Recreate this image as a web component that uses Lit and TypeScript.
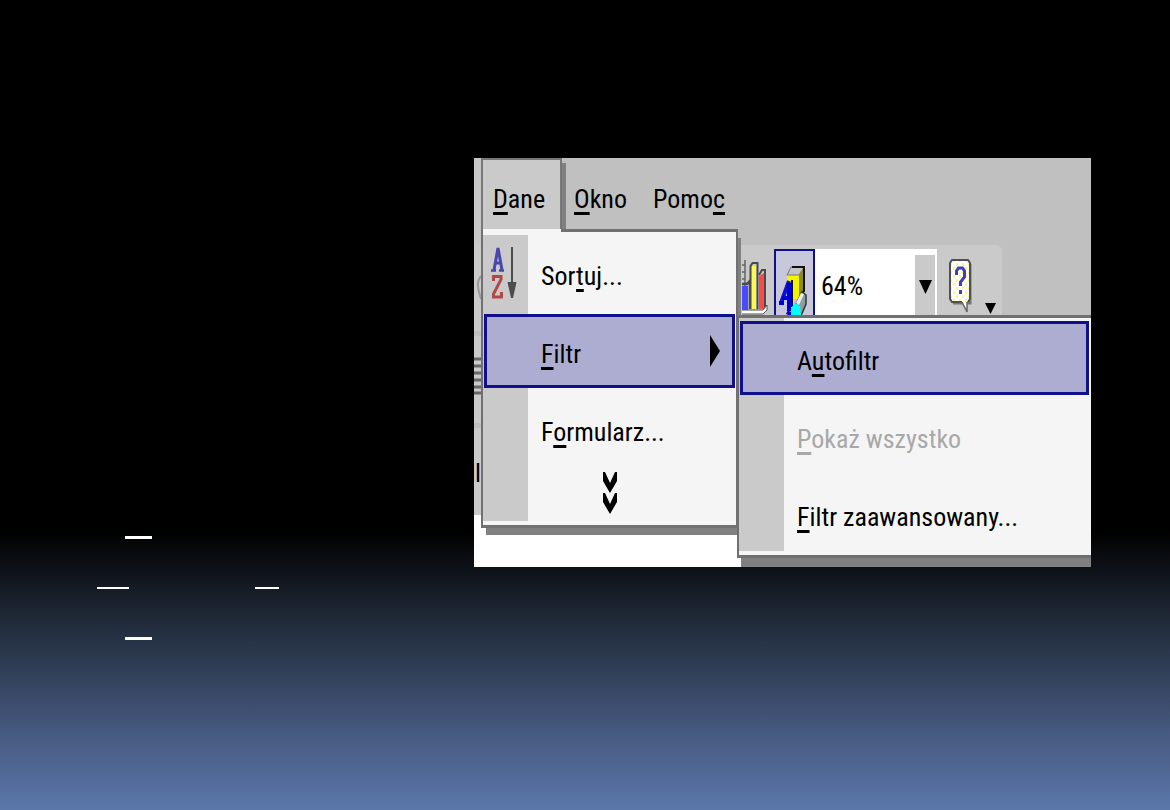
import { LitElement, html, svg, css } from "lit";
import { customElement } from "lit/decorators.js";

const sortIcon = svg`
  <svg class="icon" viewBox="0 0 28 54" width="28" height="54" aria-hidden="true">
    <path d="M3 24 7 2 11 24M4.500 17h5" fill="none" stroke="#4848ac" stroke-width="3"/>
    <path d="M0 24.500h5M8 24.500h5" fill="none" stroke="#4848ac" stroke-width="2.500"/>
    <path d="M2.500 35v-4.500h7.500v3L2.500 48v3h8v-5" fill="none" stroke="#b04848" stroke-width="3"/>
    <path d="M21 1v38" stroke="#4c4c4c" stroke-width="2"/>
    <path d="M16.500 36h9L22 52h-2z" fill="#4c4c4c"/>
  </svg>`;

const chartIcon = svg`
  <svg class="icon" viewBox="0 0 26 60" width="26" height="60" aria-hidden="true">
    <path d="M3 2v26M0 7h3M0 14h3M0 21h3" fill="none" stroke="#666" stroke-width="1.500"/>
    <path d="M0 28h6v24H0z" fill="#4a4aff"/>
    <path d="M0 26h5l3-3v28" fill="none" stroke="#4a4a4a" stroke-width="2.500"/>
    <path d="M9 8h5v43H9z" fill="#fafa50"/>
    <path d="M8.500 51V8l2-3h5v46" fill="none" stroke="#4a4a4a" stroke-width="2"/>
    <path d="M17 18l5-3v36h-5z" fill="#ff4848"/>
    <path d="M17 17l3-5h3v39" fill="none" stroke="#4a4a4a" stroke-width="2"/>
    <path d="M0 52h21l4-5v5l-4 4H0" fill="#fff" stroke="#555" stroke-width="1"/>
    <path d="M0 58.500h22" stroke="#4a4a4a" stroke-width="3"/>
  </svg>`;

const drawIcon = svg`
  <svg class="icon" viewBox="0 0 30 56" width="30" height="56" aria-hidden="true">
    <path d="M8 10h12v24H8z" fill="#f4f400"/>
    <path d="M8 10 12 2h13l-5 8z" fill="#c4c4c4" stroke="#777" stroke-width="1"/>
    <path d="M20 10 25 2v24l-5 8z" fill="#8c8c20"/>
    <path d="M13 2h12v24l-4 6" fill="none" stroke="#111" stroke-width="2"/>
    <path d="M10 16 2 38" fill="none" stroke="#1010c8" stroke-width="4"/>
    <path d="M10 18v28" stroke="#0000d8" stroke-width="4"/>
    <path d="M3 33h8M0 38h5M8 47l5 3" stroke="#0000d8" stroke-width="4"/>
    <path d="M13 15v27" stroke="#101030" stroke-width="2"/>
    <path d="M16 41 23 27l4 3v9l-6 14z" fill="#8ca0a0" stroke="#333" stroke-width="1.500"/>
    <path d="M17 38 22 28l3 1-5 11z" fill="#eee"/>
    <path d="M12 43l4-5 5 3 1 9-3 5h-4l-3-5z" fill="#00ffff"/>
  </svg>`;

const helpIcon = svg`
  <svg class="icon" viewBox="0 0 24 56" width="24" height="56" aria-hidden="true">
    <defs>
      <pattern id="dots" width="6" height="8" patternUnits="userSpaceOnUse">
        <path d="M0 0h6v8H0z" fill="#fff"/>
        <path d="M4 1h2v3H4zM1 5h2v3H1z" fill="#fff87c"/>
      </pattern>
    </defs>
    <path d="M4 45h17V6" fill="none" stroke="#777" stroke-width="3"/>
    <path d="M3 2h16l2 3v36l-3 3v10l-5-10H3l-2-3V5z" fill="url(#dots)"/>
    <path d="M13 44H3l-2-3V5l2-3h16l2 3v36l-2 3" fill="none" stroke="#505050" stroke-width="2"/>
    <path d="M13 44l5 10V44" fill="none" stroke="#666" stroke-width="1.500"/>
    <path d="M7.500 17v-4l2-3h4l2 3v6l-4 5v4" fill="none" stroke="#4040b4" stroke-width="3"/>
    <path d="M10 32h3v4h-3z" fill="#4040b4"/>
  </svg>`;

const chevrons = svg`
  <svg class="icon" viewBox="0 0 14 42" width="14" height="42" aria-hidden="true">
    <path d="M0 0v9l7 12 7-12V0h-2L7 11 2 0zM0 21v9l7 12 7-12v-9h-2L7 32 2 21z" fill="#000"/>
  </svg>`;

@customElement("app-root")
export class AppRoot extends LitElement {
  static styles = css`
    :host {
      display: block;
      font-family: "Roboto Condensed", "Liberation Sans", sans-serif;
      font-size: 26px;
      line-height: 40px;
      color: #000;
    }
    * { box-sizing: border-box; }
    .slide {
      min-height: 100vh;
      display: grid;
      grid-template-columns: 377px 1fr;
      align-items: start;
      padding: 158px 79px 0 97px;
      background: linear-gradient(#000 0, #000 65.500%, #1c2430 75%, #2e3d54 82%, #485b82 91%, #5b77aa 100%);
    }
    .blanks {
      display: grid;
      gap: 48px;
      padding-top: 378px;
    }
    .line { display: flex; gap: 126px; }
    .line.inset { padding-left: 28px; }
    .rule { width: 27px; height: 3px; background: #fff; }
    .rule.wide { width: 32px; height: 2px; }
    .rule.slim { width: 24px; height: 2px; }

    .window {
      position: relative;
      height: 409px;
      overflow: hidden;
      background: #fff;
    }
    button, select {
      font: inherit;
      color: inherit;
      border: 0;
      border-radius: 0;
      margin: 0;
      padding: 0;
      background: none;
      text-align: left;
    }
    u {
      text-decoration-thickness: 3px;
      text-underline-offset: 4px;
      text-decoration-skip-ink: none;
    }
    .menubar {
      display: flex;
      height: 87px;
      padding-left: 7px;
      background: linear-gradient(90deg, #c8c8c8, #c0c0c0 15%);
    }
    .tab { height: 76px; padding: 6px 14px 0 12px; }
    .tab.open {
      width: 81px;
      padding: 4px 0 0 10px;
      border: 2px solid #787878;
      border-bottom: 0;
      background: #cacaca;
      box-shadow: 4px 5px 0 #808080;
    }
    .tools { height: 270px; background: #c0c0c0; }
    .strip {
      display: flex;
      align-items: flex-start;
      width: 528px;
      height: 270px;
      padding: 4px 0 0 268px;
      border-radius: 0 6px 0 0;
      background: #cacaca;
    }
    .tool { padding-top: 9px; }
    .tool.chart { width: 32px; }
    .tool.active {
      width: 41px;
      height: 80px;
      padding: 7px 0 0 3px;
      border: 2px solid #10108c;
      background: #c8c8dc;
    }
    .zoom {
      display: flex;
      position: relative;
      width: 122px;
      height: 80px;
      background: #fff;
    }
    .zoom select {
      appearance: none;
      width: 100%;
      height: 74px;
      padding-left: 6px;
      outline: 0;
    }
    .drop {
      position: absolute;
      top: 6px;
      right: 2px;
      bottom: 0;
      width: 20px;
      padding: 25px 0 0 4px;
      background: #cacaca;
      pointer-events: none;
    }
    .icon { display: block; }
    .tool.help { width: 48px; padding-left: 12px; }
    .tool.more { padding-top: 54px; }

    .edge { position: absolute; left: 0; top: 87px; width: 7px; height: 270px; }
    .cell { position: absolute; right: 0; top: 208px; }

    .menu {
      position: absolute;
      z-index: 1;
      left: 7px;
      top: 71px;
      width: 257px;
      padding: 7px 0 4px;
      border: solid #707070;
      border-width: 0 2px 3px;
      background: linear-gradient(90deg, #cacaca 45px, #f5f5f5 45px);
      box-shadow: 4px 8px 0 -1px #808080;
    }
    .menu::before {
      content: "";
      position: absolute;
      top: 0;
      left: 0;
      right: 0;
      height: 6px;
      background: linear-gradient(90deg, transparent 78px, #707070 78px) 0 0 / 100% 3px no-repeat, #f5f5f5;
    }
    .menu::after, .submenu::after {
      content: "";
      position: absolute;
      left: 0;
      right: 0;
      bottom: 0;
      height: 4px;
      background: #f5f5f5;
    }
    .item {
      display: flex;
      align-items: center;
      width: 251px;
      height: 74px;
      margin: 0 0 4px 1px;
      padding: 0 12px 0 4px;
      border: 3px solid transparent;
    }
    .item .mark { flex: none; width: 50px; }
    .item .label { flex: 1; padding-top: 6px; white-space: nowrap; }
    .item.current { border-color: #10108c; background: #adadd2; }
    .expand { display: flex; justify-content: center; width: 100%; height: 51px; padding-top: 2px; }

    .submenu {
      position: absolute;
      z-index: 2;
      left: 263px;
      right: 0;
      top: 157px;
      height: 243px;
      padding: 3px 3px 0 0;
      border: solid #707070;
      border-width: 3px 0 3px 2px;
      background: linear-gradient(90deg, #cacaca 45px, #f5f5f5 45px);
      box-shadow: 4px 9px 0 #808080;
    }
    .submenu .item { width: 100%; }
    .off { color: #a8a8a8; }
  `;

  private item(label: unknown, mark: unknown = "", extra = "", tail: unknown = "") {
    return html`<button class="item ${extra}" role="menuitem" ?disabled=${extra === "off"}>
      <span class="mark">${mark}</span><span class="label">${label}</span>${tail}
    </button>`;
  }

  render() {
    return html`
      <main class="slide">
        <div class="blanks" aria-hidden="true">
          <div class="line inset"><span class="rule"></span></div>
          <div class="line"><span class="rule wide"></span><span class="rule slim"></span></div>
          <div class="line inset"><span class="rule"></span></div>
        </div>
        <section class="window">
          <nav class="menubar">
            <button class="tab open"><u>D</u>ane</button>
            <button class="tab"><u>O</u>kno</button>
            <button class="tab">Pomo<u>c</u></button>
          </nav>
          <div class="tools">
            <div class="strip">
              <button class="tool chart" aria-label="Wykres">${chartIcon}</button>
              <button class="tool active" aria-label="Rysowanie">${drawIcon}</button>
              <div class="zoom">
                <select aria-label="Powiększenie"><option>64%</option></select>
                <span class="drop">
                  <svg class="icon" width="13" height="14" viewBox="0 0 13 14"><path d="M0 0h13L6.500 14z"/></svg>
                </span>
              </div>
              <button class="tool help" aria-label="Pomoc">${helpIcon}</button>
              <button class="tool more" aria-label="Opcje">
                <svg class="icon" width="11" height="11" viewBox="0 0 11 11"><path d="M0 0h11L5.500 11z"/></svg>
              </button>
            </div>
          </div>
          <div class="edge">
            <svg class="icon" width="7" height="270" viewBox="0 0 7 270" aria-hidden="true">
              <path d="M7 31Q3 36 4 42T7 54" fill="none" stroke="#999" stroke-width="2"/>
              <path d="M0 86h7v5H0zM0 178h7v5H0z" fill="#c0c0c0"/>
              <path d="M0 114h7M0 121h7M0 128h7M0 135h7M0 142h7M0 148h7" stroke="#666" stroke-width="3"/>
            </svg>
            <span class="cell">al</span>
          </div>
          <div class="menu" role="menu">
            ${this.item(html`Sor<u>t</u>uj...`, sortIcon)}
            ${this.item(
              html`<u>F</u>iltr`,
              "",
              "current",
              html`<svg class="icon" width="10" height="32" viewBox="0 0 10 32"><path d="M0 0v32l10-16z"/></svg>`
            )}
            ${this.item(html`F<u>o</u>rmularz...`)}
            <button class="expand" aria-label="Rozwiń">${chevrons}</button>
          </div>
          <div class="submenu" role="menu">
            ${this.item(html`A<u>u</u>tofiltr`, "", "current")}
            ${this.item(html`<u>P</u>okaż wszystko`, "", "off")}
            ${this.item(html`<u>F</u>iltr zaawansowany...`)}
          </div>
        </section>
      </main>
    `;
  }
}
